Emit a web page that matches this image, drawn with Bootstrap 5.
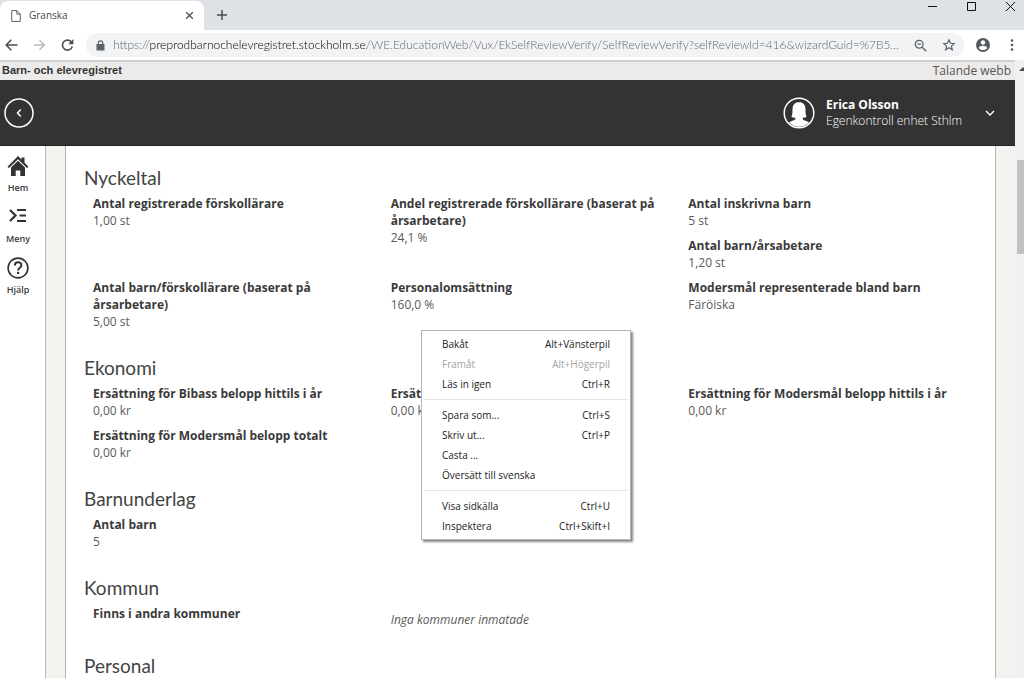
<!DOCTYPE html>
<html lang="sv">
<head>
<meta charset="utf-8">
<meta name="viewport" content="width=device-width, initial-scale=1">
<title>Granska</title>
<link href="https://cdn.jsdelivr.net/npm/bootstrap@5.3.0/dist/css/bootstrap.min.css" rel="stylesheet">
<style>
  body { font-family: "Open Sans", "Noto Sans", sans-serif; font-size: 12px; line-height: 17px; color: #333; background: #fff; }
  svg { display: block; flex: none; }
  button { color: inherit; }
  .ui-btn { border: 0; padding: 0; background: none; display: block; }

  .tab-strip { background: #dee1e6; height: 30px; }
  .browser-tab { width: 204px; height: 29px; margin-top: 1px; background: #fff; border-radius: 8px 8px 0 0; font-size: 10px; color: #45494d; padding: 0 10px 0 11px; }
  .new-tab { margin: 10px 0 0 13px; }
  .tool-row { height: 30px; padding: 0 6px 0 5px; color: #5f6368; }
  .address { height: 24px; margin-left: 12px; padding: 0 9px 0 10px; background: #f1f3f4; border-radius: 12px; }
  .address input {
    border: 0; outline: 0; padding: 0; min-width: 0; font: 300 12px/20px Lato, sans-serif;
    background: linear-gradient(90deg, #5a5f64 36px, #000 36px 254px, #5a5f64 254px);
    -webkit-background-clip: text; background-clip: text; color: transparent;
  }

  .site-strip { height: 20px; background: #edebe9; border-top: 2px solid #cfcfcf; padding: 0 4px 0 2px; }
  .site-strip strong { font: bold 11px/16px "Liberation Sans", sans-serif; color: #333; }
  .site-strip a { color: #555; text-decoration: none; font-size: 12px; }
  .site-header { height: 66px; background: #333; border-bottom: 1px solid #222; padding: 0 20px 0 4px; color: #fff; }
  .user-text { width: 149px; line-height: 16px; margin: 0 10px 0 11px; }
  .user-text span { font-weight: 300; }
  .side-menu { width: 46px; border-right: 1px solid #b9b9b9; padding: 9px 9px 0 0; gap: 12px; }
  .side-menu a { color: #3a3a3a; text-decoration: none; font-size: 9px; line-height: 13px; font-weight: 600; gap: 4px; }
  .backdrop { background: #f3f2ee; padding: 0 19px; }
  .sheet { border: solid #b5b5b5; border-width: 0 1px; padding: 2px 18px 0; background: #fff; }
  .sheet h2 { font: 400 19px/24px Lato, sans-serif; margin: 18px 0 5px; color: #444; }
  .sheet .row { --bs-gutter-x: 18px; margin: 0; }
  dl, dd { margin: 0; }
  dt { font-weight: 700; color: #3a3a3a; }
  dd { margin-bottom: 8px; color: #5a5a5a; }
  .empty-note { padding-top: 6px; }

  .page-scroll { width: 9px; background: #f1f1f1; }
  .page-scroll .arrow { margin: 7px 0 0 4px; }
  .page-scroll .thumb { margin: 89px 0 0 2px; height: 94px; background: #c1c1c1; }

  .ctx-menu { position: absolute; left: 421px; top: 330px; width: 210px; padding: 3px 2px; background: #fff; border: 1px solid #b5b5b5; box-shadow: 2px 2px 2px #888; font-size: 10px; color: #222; }
  .ctx-menu button { width: 100%; height: 20px; padding: 0 18px; }
  .ctx-menu button:disabled { color: #a3a3a3; }
  .ctx-menu hr { margin: 5px 0; border-top: 1px solid #e4e4e4; opacity: 1; }
</style>
</head>
<body class="vh-100 overflow-hidden d-flex flex-column position-relative">

<header class="flex-shrink-0">
  <div class="tab-strip d-flex align-items-start">
    <div class="browser-tab d-flex align-items-center">
      <svg width="10" height="12" viewBox="0 0 10 12" fill="none" stroke="#5f6368"><path d="M.7.6h5.2l3.4 3.4v7.4H.7zM5.8.8v3.3h3.3"/></svg>
      <span class="ms-2 flex-grow-1">Granska</span>
      <button class="ui-btn" aria-label="Stäng flik"><svg width="9" height="9" viewBox="0 0 9 9" stroke="#4b4f53" stroke-width="1.3"><path d="M1.2 1.2l6.600 6.600M7.800 1.200L1.200 7.800"/></svg></button>
    </div>
    <button class="ui-btn new-tab" aria-label="Ny flik"><svg width="10" height="10" viewBox="0 0 10 10" stroke="#4b4f53" stroke-width="1.5"><path d="M5 0v10M0 5h10"/></svg></button>
    <div class="d-flex ms-auto gap-4 pe-2">
      <button class="ui-btn pe-1" aria-label="Minimera"><svg width="11" height="13" viewBox="0 0 11 13" stroke="#111"><path d="M1 6.500h9"/></svg></button>
      <button class="ui-btn pe-1" aria-label="Maximera"><svg width="11" height="13" viewBox="0 0 11 13" fill="none" stroke="#111"><path d="M1.500 2.500h8v8h-8z"/></svg></button>
      <button class="ui-btn" aria-label="Stäng"><svg width="11" height="13" viewBox="0 0 11 13" stroke="#111"><path d="M1 2l9 9M10 2l-9 9"/></svg></button>
    </div>
  </div>
  <div class="tool-row d-flex align-items-center">
    <button class="ui-btn" aria-label="Bakåt"><svg width="13" height="12" viewBox="0 0 13 12" fill="none" stroke="#4b4f53" stroke-width="1.6"><path d="M12.500 6H1.400M6.300.8L1.200 6l5.100 5.200"/></svg></button>
    <button class="ui-btn ms-3" aria-label="Framåt" disabled><svg width="11" height="12" viewBox="0 0 12 12" fill="none" stroke="#b6b8bb" stroke-width="1.5"><path d="M0 6h11M6 .8L11.200 6 6 11.200"/></svg></button>
    <button class="ui-btn ms-3" aria-label="Läs in igen"><svg width="13" height="12" viewBox="0 0 13 12" fill="none" stroke="#4b4f53" stroke-width="1.6"><path d="M10.600 3.300A5 5 0 1 0 11.300 7.500"/><path d="M12.400 0v5.200H7.200z" fill="#4b4f53" stroke="none"/></svg></button>
    <div class="address d-flex align-items-center flex-grow-1">
      <svg width="9" height="11" viewBox="0 0 9 11"><path d="M.5 4h8v6.500h-8z" fill="#5f6368"/><path d="M2.300 4.500V3a2.200 2.200 0 0 1 4.400 0v1.500" fill="none" stroke="#5f6368" stroke-width="1.2"/></svg>
      <input class="flex-grow-1 ms-2" aria-label="Adress" value="https://preprodbarnochelevregistret.stockholm.se/WE.EducationWeb/Vux/EkSelfReviewVerify/SelfReviewVerify?selfReviewId=416&amp;wizardGuid=%7B5...">
      <button class="ui-btn ms-1" aria-label="Zooma"><svg width="13" height="13" viewBox="0 0 13 13" fill="none" stroke="#5f6368" stroke-width="1.3"><circle cx="5.200" cy="5.200" r="3.900"/><path d="M8 8l4.200 4.200M3.400 5.200h3.600"/></svg></button>
      <button class="ui-btn ms-3" aria-label="Bokmärk"><svg width="12" height="12" viewBox="0 0 12 12" fill="none" stroke="#5f6368" stroke-width="1.2"><path d="M6 .8l1.500 3.500 3.800.3-2.900 2.500.9 3.700L6 8.800l-3.300 2 .9-3.700L.7 4.600l3.800-.3z"/></svg></button>
    </div>
    <button class="ui-btn ms-2 ps-1" aria-label="Profil"><svg width="14" height="14" viewBox="0 0 14 14"><circle cx="7" cy="7" r="7" fill="#54585d"/><circle cx="7" cy="4.500" r="2.200" fill="#fff"/><path d="M2.700 10c.8-3 7.800-3 8.600 0-2 2.800-6.600 2.800-8.600 0z" fill="#fff"/></svg></button>
    <button class="ui-btn ms-3 ps-1 pe-1" aria-label="Meny"><svg width="4" height="12" viewBox="0 0 4 12" fill="#54585d"><circle cx="2" cy="1.500" r="1.300"/><circle cx="2" cy="6" r="1.300"/><circle cx="2" cy="10.500" r="1.300"/></svg></button>
  </div>
</header>

<div class="d-flex flex-grow-1 overflow-hidden">
  <div class="d-flex flex-column flex-grow-1 overflow-hidden">
    <div class="site-strip d-flex justify-content-between flex-shrink-0">
      <strong>Barn- och elevregistret</strong>
      <a href="#">Talande webb</a>
    </div>
    <div class="site-header d-flex align-items-center justify-content-between flex-shrink-0">
      <button class="ui-btn" aria-label="Tillbaka"><svg width="30" height="30" viewBox="0 0 30 30" fill="none" stroke="#fff" stroke-width="1.500"><circle cx="15" cy="15" r="14"/><path d="M16.800 11.500L13.500 15l3.300 3.500"/></svg></button>
      <button class="ui-btn d-flex align-items-center text-start">
        <svg width="32" height="32" viewBox="0 0 32 32"><circle cx="16" cy="16" r="14.800" fill="none" stroke="#fff" stroke-width="1.500"/><path d="M8.500 19.800C9.800 17 9.300 14 9.600 11c.4-3.800 2.900-5.700 6.400-5.700s6 1.900 6.400 5.700c.3 3-.2 6 1.100 8.800-1 .8-2.400 1-3.800.9v1.600c1.300 1.500 4.300 1.500 6.300 3.200a14 14 0 0 1-20 0c2-1.700 5-1.700 6.300-3.200v-1.600c-1.400.1-2.800-.1-3.800-.9z" fill="#fff"/></svg>
        <span class="user-text flex-shrink-0"><strong class="d-block">Erica Olsson</strong><span class="d-block">Egenkontroll enhet Sthlm</span></span>
        <svg width="10" height="8" viewBox="0 0 10 8" fill="none" stroke="#fff" stroke-width="1.400"><path d="M1 2l4 4 4-4"/></svg>
      </button>
    </div>

    <div class="d-flex flex-grow-1 overflow-hidden">
      <nav class="side-menu d-flex flex-column flex-shrink-0" aria-label="Huvudmeny">
        <a href="#" class="d-flex flex-column align-items-center"><svg width="22" height="22" viewBox="0 0 22 22"><path d="M.5 11.700L11 1l3.500 3.500V2.500h3V7.500l4 4.200-1.500 1.300L11 4.200 2 13z" fill="#333"/><path d="M11 5.700l7 6.900V21h-4.700v-5.500H8.700V21H4v-8.400z" fill="#333"/></svg>Hem</a>
        <a href="#" class="d-flex flex-column align-items-center"><svg width="22" height="22" viewBox="0 0 22 22" fill="none" stroke="#333" stroke-width="2.200"><path d="M3 4l5.500 5.500L3 15M10 4h9M12.500 9.500H19M10 15h9"/></svg>Meny</a>
        <a href="#" class="d-flex flex-column align-items-center"><svg width="22" height="22" viewBox="0 0 22 22" fill="none" stroke="#333"><circle cx="11" cy="11" r="9.900" stroke-width="1.600"/><path d="M7.800 8.600c.1-4.600 6.700-4.200 6.600-.3 0 2.400-3.300 2.500-3.300 5.200" stroke-width="2"/><path d="M11.100 14.800v2.200" stroke-width="2.200"/></svg>Hjälp</a>
      </nav>
      <div class="backdrop flex-grow-1 d-flex">
        <main class="sheet flex-grow-1">
          <section>
            <h2>Nyckeltal</h2>
            <div class="row">
              <dl class="col-4"><dt>Antal registrerade förskollärare</dt><dd>1,00 st</dd></dl>
              <dl class="col-4"><dt>Andel registrerade förskollärare (baserat på årsarbetare)</dt><dd>24,1 %</dd></dl>
              <dl class="col-4"><dt>Antal inskrivna barn</dt><dd>5 st</dd><dt>Antal barn/årsabetare</dt><dd>1,20 st</dd></dl>
            </div>
            <div class="row">
              <dl class="col-4"><dt>Antal barn/förskollärare (baserat på årsarbetare)</dt><dd>5,00 st</dd></dl>
              <dl class="col-4"><dt>Personalomsättning</dt><dd>160,0 %</dd></dl>
              <dl class="col-4"><dt>Modersmål representerade bland barn</dt><dd>Färöiska</dd></dl>
            </div>
          </section>
          <section>
            <h2>Ekonomi</h2>
            <div class="row">
              <dl class="col-4"><dt>Ersättning för Bibass belopp hittils i år</dt><dd>0,00 kr</dd><dt>Ersättning för Modersmål belopp totalt</dt><dd>0,00 kr</dd></dl>
              <dl class="col-4"><dt>Ersättning</dt><dd>0,00 kr</dd></dl>
              <dl class="col-4"><dt>Ersättning för Modersmål belopp hittils i år</dt><dd>0,00 kr</dd></dl>
            </div>
          </section>
          <section>
            <h2>Barnunderlag</h2>
            <div class="row">
              <dl class="col-4"><dt>Antal barn</dt><dd>5</dd></dl>
            </div>
          </section>
          <section>
            <h2>Kommun</h2>
            <dl class="row">
              <dt class="col-4">Finns i andra kommuner</dt>
              <dd class="col-4 empty-note fst-italic">Inga kommuner inmatade</dd>
            </dl>
          </section>
          <section>
            <h2>Personal</h2>
          </section>
        </main>
      </div>
    </div>
  </div>
  <div class="page-scroll flex-shrink-0" aria-hidden="true">
    <svg class="arrow" width="5" height="4" viewBox="0 0 5 4"><path d="M0 4l4-4 4 4z" fill="#505050"/></svg>
    <div class="thumb"></div>
  </div>
</div>

<div class="ctx-menu" role="menu">
  <button class="ui-btn d-flex justify-content-between align-items-center" role="menuitem"><span>Bakåt</span><span>Alt+Vänsterpil</span></button>
  <button class="ui-btn d-flex justify-content-between align-items-center" role="menuitem" disabled><span>Framåt</span><span>Alt+Högerpil</span></button>
  <button class="ui-btn d-flex justify-content-between align-items-center" role="menuitem"><span>Läs in igen</span><span>Ctrl+R</span></button>
  <hr>
  <button class="ui-btn d-flex justify-content-between align-items-center" role="menuitem"><span>Spara som...</span><span>Ctrl+S</span></button>
  <button class="ui-btn d-flex justify-content-between align-items-center" role="menuitem"><span>Skriv ut...</span><span>Ctrl+P</span></button>
  <button class="ui-btn d-flex justify-content-between align-items-center" role="menuitem"><span>Casta ...</span></button>
  <button class="ui-btn d-flex justify-content-between align-items-center" role="menuitem"><span>Översätt till svenska</span></button>
  <hr>
  <button class="ui-btn d-flex justify-content-between align-items-center" role="menuitem"><span>Visa sidkälla</span><span>Ctrl+U</span></button>
  <button class="ui-btn d-flex justify-content-between align-items-center" role="menuitem"><span>Inspektera</span><span>Ctrl+Skift+I</span></button>
</div>

<script src="https://cdn.jsdelivr.net/npm/bootstrap@5.3.0/dist/js/bootstrap.bundle.min.js"></script>
</body>
</html>
